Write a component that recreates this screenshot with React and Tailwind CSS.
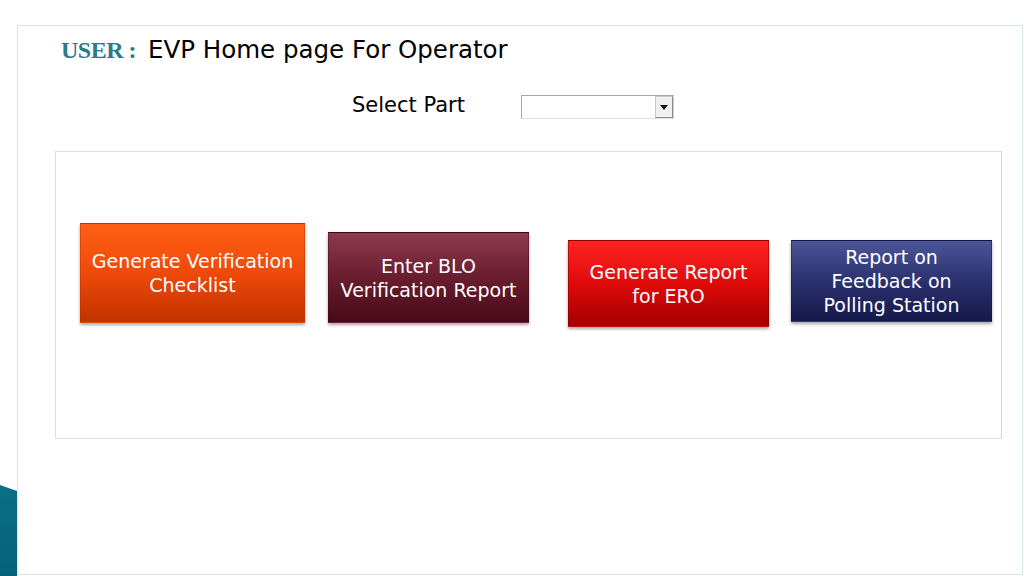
export default function App() {
  const sans = { fontFamily: '"DejaVu Sans", Verdana, sans-serif' };
  return (
    <div className="w-[1024px] h-[576px] bg-white flex overflow-hidden" style={sans}>
      <div className="w-[17px] flex flex-col justify-end">
        <div
          className="h-[91px] bg-gradient-to-b from-[#0b6f86] to-[#06627a]"
          style={{ clipPath: 'polygon(0 0, 100% 6px, 100% 100%, 0 100%)' }}
        />
      </div>
      <div className="mt-[25px] w-[1006px] h-[550px] border border-[#d3e7e9] bg-white flex flex-col">
        <div className="pl-[43px] pt-[10px] flex items-baseline h-[40px]">
          <span
            className="text-[24px] font-bold text-[#2b7a8b] tracking-[-0.5px] leading-[28px]"
            style={{ fontFamily: '"Liberation Serif", "Times New Roman", serif' }}
          >
            USER :
          </span>
          <span className="ml-[12px] text-[24.5px] text-black leading-[28px]">EVP Home page For Operator</span>
        </div>
        <div className="flex items-start mt-[25px] h-[28px]">
          <span className="ml-[334px] text-[21px] text-black leading-[28px]">Select Part</span>
          <div className="ml-[56px] mt-[4px] w-[153px] h-[24px] border border-[#a8a8a8] border-r-[#d0d0d0] border-b-[#e0e0e0] flex justify-end bg-white">
            <div className="w-[18px] h-full bg-[#efefef] border border-[#c8c8c8] border-r-[#8a8a8a] border-b-[#8a8a8a] flex items-center justify-center">
              <svg width="8" height="5" viewBox="0 0 8 5">
                <path d="M0 0 H8 L4 5 Z" fill="#111" />
              </svg>
            </div>
          </div>
        </div>
        <div className="ml-[37px] mt-[32px] w-[947px] h-[288px] border border-[#d9dede] border-r-[#c9d6d8] flex items-start">
          <div className="ml-[24px] mt-[71px] w-[225px] h-[100px] bg-gradient-to-b from-[#ff5f14] via-[#ee4a0a] to-[#c23300] border border-[#b83000]/40 shadow-[0_2px_3px_rgba(0,0,0,0.35)] flex items-center justify-center text-center text-white text-[19px] leading-[24px]">
            <span>Generate Verification<br />Checklist</span>
          </div>
          <div className="ml-[23px] mt-[80px] w-[201px] h-[91px] bg-gradient-to-b from-[#8c3b4d] via-[#6a1d2f] to-[#470a19] border border-[#3a0a14]/40 shadow-[0_2px_3px_rgba(0,0,0,0.35)] flex items-center justify-center text-center text-white text-[19px] leading-[24px]">
            <span>Enter BLO<br />Verification Report</span>
          </div>
          <div className="ml-[39px] mt-[88px] w-[201px] h-[87px] bg-gradient-to-b from-[#ff2222] via-[#e00a0a] to-[#a50000] border border-[#7a0000]/50 shadow-[0_2px_3px_rgba(0,0,0,0.35)] flex items-center justify-center text-center text-white text-[19px] leading-[24px]">
            <span>Generate Report<br />for ERO</span>
          </div>
          <div className="ml-[22px] mt-[88px] w-[201px] h-[82px] bg-gradient-to-b from-[#4c5597] via-[#2c3270] to-[#16194a] border border-[#10123a]/40 shadow-[0_2px_3px_rgba(0,0,0,0.35)] flex items-center justify-center text-center text-white text-[19px] leading-[24px]">
            <span>Report on<br />Feedback on<br />Polling Station</span>
          </div>
        </div>
      </div>
    </div>
  );
}
